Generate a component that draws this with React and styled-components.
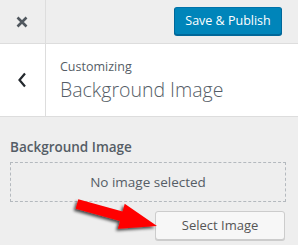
import React from "react";
import styled, { createGlobalStyle } from "styled-components";

const Global = createGlobalStyle`
  html, body { margin: 0; padding: 0; background: #eeeeee; }
  body { font-family: "Open Sans", "Noto Sans", sans-serif; color: #555d66; }
  * { box-sizing: border-box; }
`;

const Frame = styled.div`
  position: relative;
  width: 298px;
  height: 245px;
  overflow: hidden;
  background: #eeeeee;
`;

const TopBar = styled.div`
  display: flex;
  align-items: center;
  height: 44px;
  border-bottom: 1px solid #dddddd;
  background: #eeeeee;
`;

const SideCell = styled.div`
  width: 46px;
  height: 100%;
  flex: none;
  display: flex;
  align-items: center;
  justify-content: center;
  padding-right: 1px;
  border-right: 1px solid #dddddd;
`;

const Spacer = styled.div`
  flex: 1;
`;

const PrimaryButton = styled.button`
  width: 108px;
  height: 28px;
  margin-right: 16px;
  margin-top: -1px;
  padding: 0;
  border: 1px solid #0073aa;
  border-color: #0073aa #006799 #006799;
  border-radius: 3px;
  background: #0085ba;
  box-shadow: 0 1px 0 #006799;
  color: #ffffff;
  font-family: inherit;
  font-size: 12.5px;
  line-height: 26px;
`;

const InfoSection = styled.div`
  display: flex;
  height: 73px;
  background: #ffffff;
  border-bottom: 1px solid #dddddd;
`;

const TitleBlock = styled.div`
  padding: 15px 0 0 14px;
  display: flex;
  flex-direction: column;
`;

const Kicker = styled.span`
  font-size: 12.5px;
  line-height: 16px;
  color: #555d66;
`;

const Title = styled.span`
  font-size: 19.5px;
  font-weight: 300;
  line-height: 26px;
  margin-top: 2px;
  color: #555d66;
`;

const Control = styled.div`
  padding: 20px 12px 0 10px;
  display: flex;
  flex-direction: column;
`;

const Label = styled.span`
  font-size: 13.5px;
  font-weight: 600;
  line-height: 20px;
  color: #555d66;
`;

const Placeholder = styled.div`
  margin-top: 5px;
  height: 40px;
  border: 1px dashed #b4b9be;
  display: flex;
  align-items: center;
  justify-content: center;
  font-size: 13.5px;
  color: #555d66;
`;

const Actions = styled.div`
  display: flex;
  justify-content: flex-end;
  margin-top: 9px;
  padding-right: 1px;
`;

const SecondaryButton = styled.button`
  width: 130px;
  height: 29px;
  padding: 0;
  border: 1px solid #cccccc;
  border-radius: 3px;
  background: #f7f7f7;
  box-shadow: 0 1px 0 #cccccc;
  color: #555555;
  font-family: inherit;
  font-size: 13px;
  line-height: 27px;
`;

const Pointer = styled.svg`
  position: absolute;
  left: 0;
  top: 0;
  pointer-events: none;
`;

export default function App() {
  return (
    <>
      <Global />
      <Frame>
        <TopBar>
          <SideCell>
            <svg width="12" height="12" viewBox="0 0 12 12">
              <path d="M1.5 1.5 L10.5 10.5 M10.5 1.5 L1.5 10.5" stroke="#50575e" strokeWidth="2.6" strokeLinecap="butt" />
            </svg>
          </SideCell>
          <Spacer />
          <PrimaryButton>Save &amp; Publish</PrimaryButton>
        </TopBar>
        <InfoSection>
          <SideCell>
            <svg width="10" height="16" viewBox="0 0 10 16">
              <path d="M8 1.5 L2.5 8 L8 14.5" fill="none" stroke="#23282d" strokeWidth="2.2" />
            </svg>
          </SideCell>
          <TitleBlock>
            <Kicker>Customizing</Kicker>
            <Title>Background Image</Title>
          </TitleBlock>
        </InfoSection>
        <Control>
          <Label>Background Image</Label>
          <Placeholder>No image selected</Placeholder>
          <Actions>
            <SecondaryButton>Select Image</SecondaryButton>
          </Actions>
        </Control>
        <Pointer width="298" height="245" viewBox="0 0 298 245">
          <defs>
            <filter id="sh" x="-20%" y="-40%" width="140%" height="180%">
              <feGaussianBlur in="SourceAlpha" stdDeviation="1.6" />
              <feOffset dx="-2" dy="2" result="b" />
              <feComponentTransfer>
                <feFuncA type="linear" slope="0.7" />
              </feComponentTransfer>
              <feMerge>
                <feMergeNode />
                <feMergeNode in="SourceGraphic" />
              </feMerge>
            </filter>
          </defs>
          <polygon
            points="78.3,199.2 122.6,211.4 124.7,203.7 157,226 117.9,228.7 120,221 75.7,208.8"
            fill="#ff0000"
            filter="url(#sh)"
          />
        </Pointer>
      </Frame>
    </>
  );
}
